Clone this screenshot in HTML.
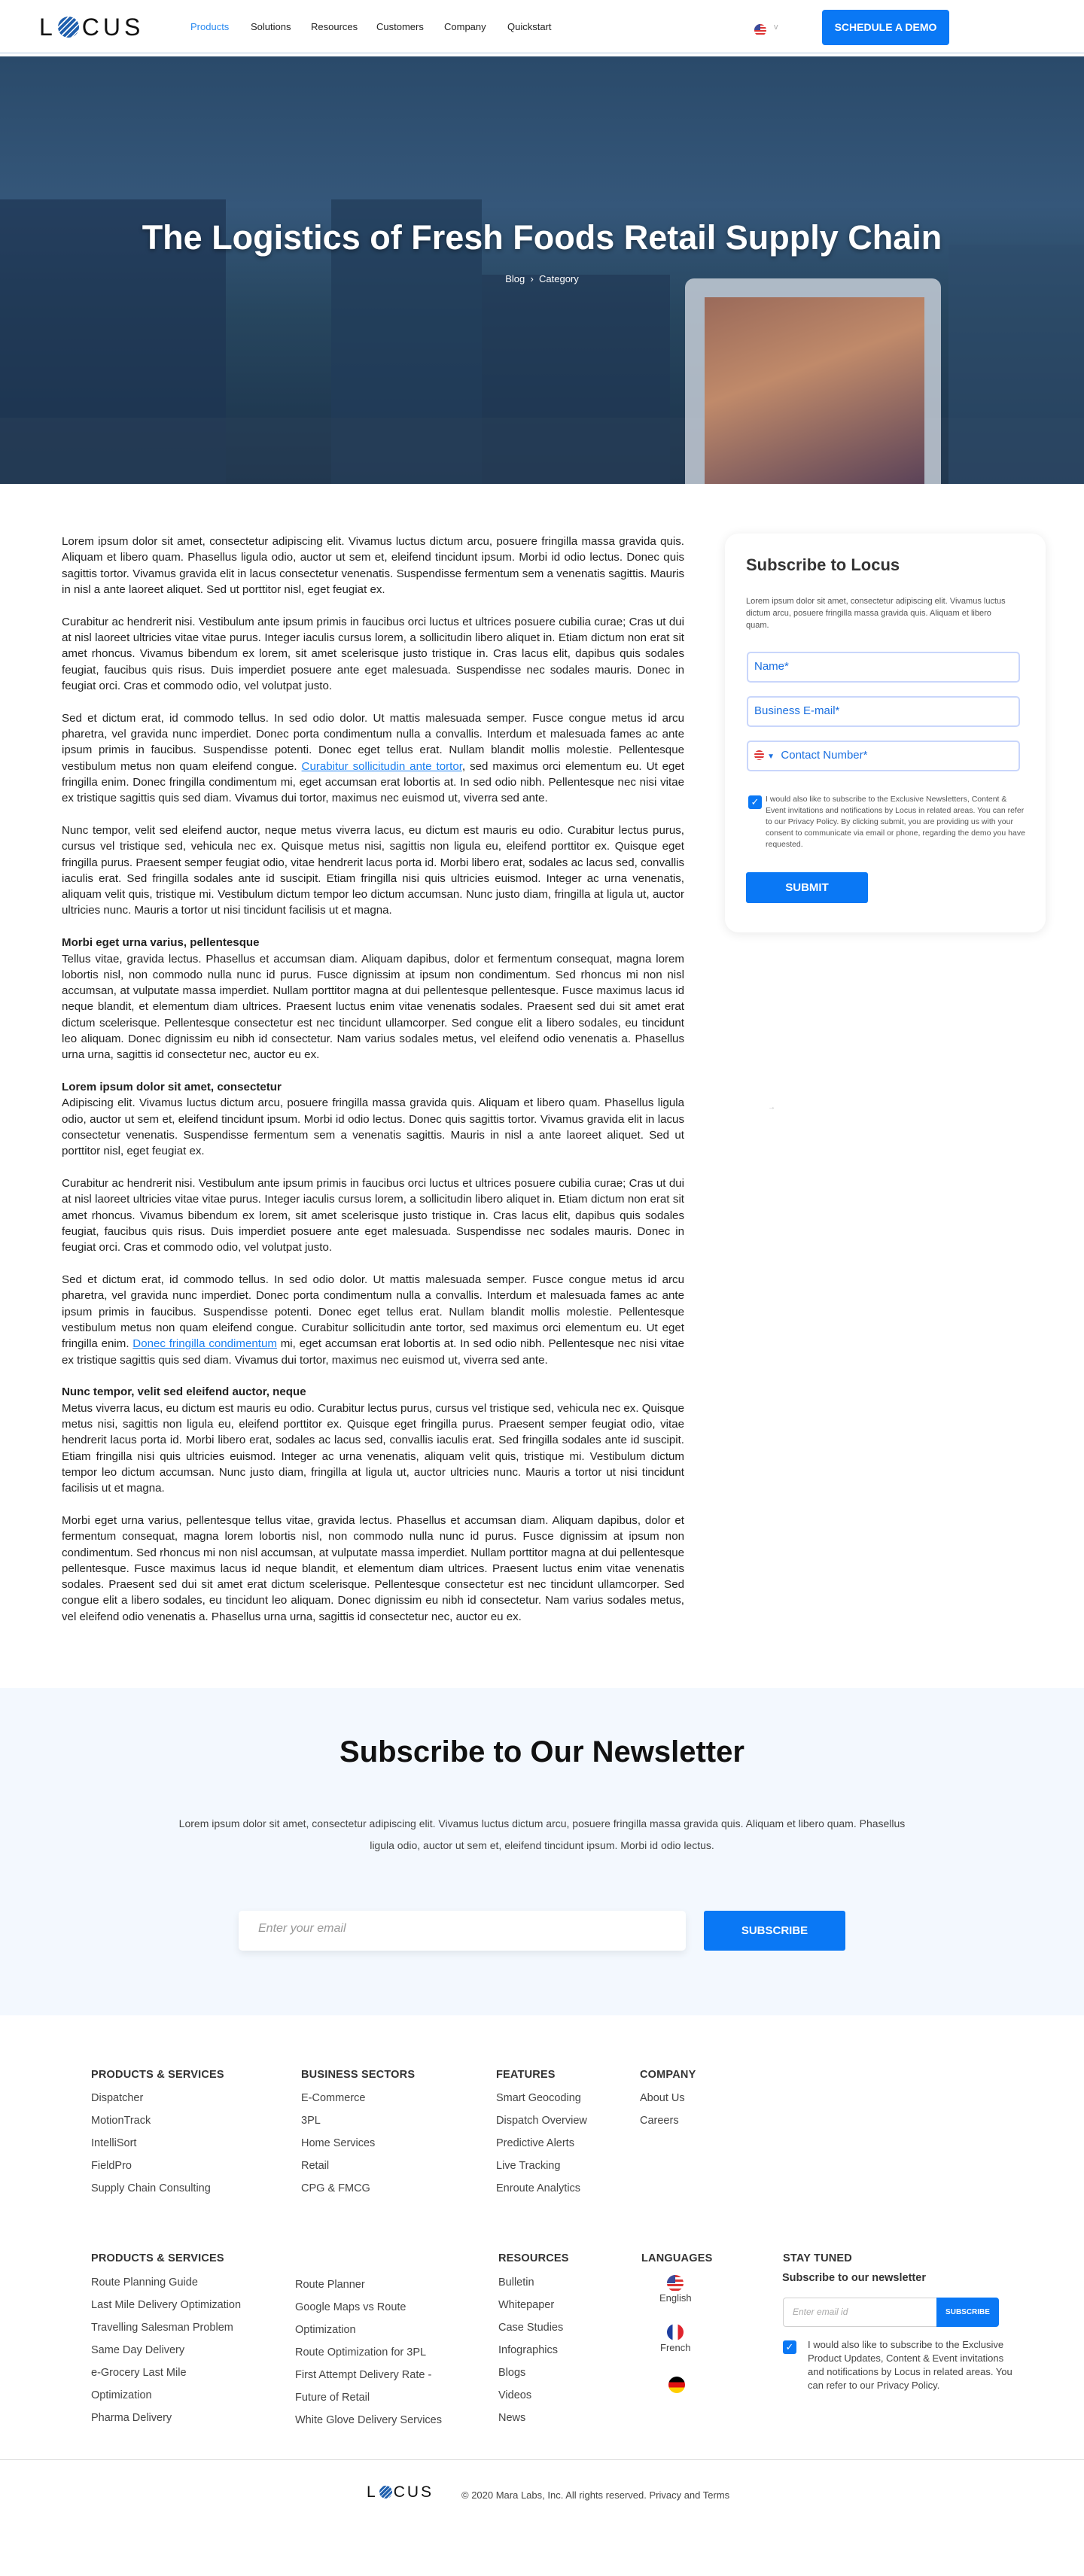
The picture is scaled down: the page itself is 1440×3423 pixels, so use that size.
<!DOCTYPE html>
<html><head><meta charset="utf-8">
<style>
*{margin:0;padding:0;box-sizing:border-box}
body{width:1440px;height:3423px;position:relative;background:#fff;font-family:"Liberation Sans",sans-serif;color:#222;overflow:hidden}
.a{position:absolute}
.nav span{position:absolute;top:28px;font-size:13px;color:#222}
.art{position:absolute;left:82px;top:709px;width:827px;font-size:15.1px;line-height:21.3px;text-align:justify;color:#222}
.art p{margin-bottom:21.5px}
.art b{display:block}
.art a{color:#1a7ff0;text-decoration:underline}
.card{left:963px;top:709px;width:426px;height:530px;border-radius:18px;box-shadow:0 2px 14px rgba(0,0,0,.09);background:#fff}
.inp{position:absolute;left:29px;width:363px;height:41px;border:2px solid #c9d6fb;border-radius:5px;color:#1a6fe0;font-size:15px;padding:9px 8px}
.fh{position:absolute;font-size:14.5px;color:#333;font-weight:bold;letter-spacing:.2px}
.fl{position:absolute;font-size:14.5px;color:#444;line-height:30px}
.blue{background:#0a78f5}
</style></head><body>
<!-- header -->
<div class="a" style="left:0;top:0;width:1440px;height:72px;background:#fff;border-bottom:3px solid #e7eef6"></div>
<div class="a" style="left:52px;top:17px;font-size:32px;letter-spacing:5px;font-weight:300;color:#111;line-height:38px">L<span style="display:inline-block;width:28px;height:28px;border-radius:50%;background:repeating-linear-gradient(135deg,#1f5fae 0 4px,#fff 4px 5.5px);vertical-align:-3px;margin:0 4px 0 2px"></span>CUS</div>
<div class="nav">
<span style="left:253px;color:#2a8af0">Products</span>
<span style="left:333px">Solutions</span>
<span style="left:413px">Resources</span>
<span style="left:500px">Customers</span>
<span style="left:590px">Company</span>
<span style="left:674px">Quickstart</span>
</div>
<div class="a" style="left:1002px;top:32px;width:16px;height:16px;border-radius:50%;background:repeating-linear-gradient(#d33 0 2px,#fff 2px 4px);overflow:hidden"><div style="width:8px;height:8px;background:#3b4a9a"></div></div>
<div class="a" style="left:1028px;top:30px;font-size:11px;color:#aaa">v</div>
<div class="a blue" style="left:1092px;top:13px;width:169px;height:47px;border-radius:4px;color:#fff;font-weight:bold;font-size:14px;text-align:center;line-height:47px">SCHEDULE A DEMO</div>
<!-- hero -->
<div class="a" style="left:0;top:75px;width:1440px;height:568px;background:linear-gradient(180deg,#2a4a6a 0%,#35577a 35%,#27465f 60%,#1b3149 100%);overflow:hidden">
<div class="a" style="left:0;top:190px;width:300px;height:380px;background:#1e3552;opacity:.7"></div>
<div class="a" style="left:440px;top:190px;width:200px;height:380px;background:#223c5a;opacity:.75"></div>
<div class="a" style="left:640px;top:290px;width:250px;height:280px;background:#203855;opacity:.65"></div>
<div class="a" style="left:0;top:480px;width:1440px;height:90px;background:#2a4058;opacity:.5"></div>
<div class="a" style="left:910px;top:295px;width:340px;height:300px;background:#cfd6de;border-radius:12px;opacity:.8"></div>
<div class="a" style="left:936px;top:320px;width:292px;height:250px;background:linear-gradient(160deg,#9a6a5a,#c08a6a 40%,#5a4258)"></div>
<div class="a" style="left:1260px;top:250px;width:180px;height:320px;background:#2e4c6c;opacity:.6"></div>
</div>
<div class="a" style="left:0;top:290px;width:1440px;text-align:center;color:#fff;font-size:45px;font-weight:bold;text-shadow:0 2px 6px rgba(0,0,0,.4)">The Logistics of Fresh Foods Retail Supply Chain</div>
<div class="a" style="left:0;top:363px;width:1440px;text-align:center;color:#fff;font-size:13px">Blog &nbsp;›&nbsp; Category</div>
<!-- article -->
<div class="art">
<p>Lorem ipsum dolor sit amet, consectetur adipiscing elit. Vivamus luctus dictum arcu, posuere fringilla massa gravida quis. Aliquam et libero quam. Phasellus ligula odio, auctor ut sem et, eleifend tincidunt ipsum. Morbi id odio lectus. Donec quis sagittis tortor. Vivamus gravida elit in lacus consectetur venenatis. Suspendisse fermentum sem a venenatis sagittis. Mauris in nisl a ante laoreet aliquet. Sed ut porttitor nisl, eget feugiat ex.</p>
<p>Curabitur ac hendrerit nisi. Vestibulum ante ipsum primis in faucibus orci luctus et ultrices posuere cubilia curae; Cras ut dui at nisl laoreet ultricies vitae vitae purus. Integer iaculis cursus lorem, a sollicitudin libero aliquet in. Etiam dictum non erat sit amet rhoncus. Vivamus bibendum ex lorem, sit amet scelerisque justo tristique in. Cras lacus elit, dapibus quis sodales feugiat, faucibus quis risus. Duis imperdiet posuere ante eget malesuada. Suspendisse nec sodales mauris. Donec in feugiat orci. Cras et commodo odio, vel volutpat justo.</p>
<p>Sed et dictum erat, id commodo tellus. In sed odio dolor. Ut mattis malesuada semper. Fusce congue metus id arcu pharetra, vel gravida nunc imperdiet. Donec porta condimentum nulla a convallis. Interdum et malesuada fames ac ante ipsum primis in faucibus. Suspendisse potenti. Donec eget tellus erat. Nullam blandit mollis molestie. Pellentesque vestibulum metus non quam eleifend congue. <a>Curabitur sollicitudin ante tortor</a>, sed maximus orci elementum eu. Ut eget fringilla enim. Donec fringilla condimentum mi, eget accumsan erat lobortis at. In sed odio nibh. Pellentesque nec nisi vitae ex tristique sagittis quis sed diam. Vivamus dui tortor, maximus nec euismod ut, viverra sed ante.</p>
<p>Nunc tempor, velit sed eleifend auctor, neque metus viverra lacus, eu dictum est mauris eu odio. Curabitur lectus purus, cursus vel tristique sed, vehicula nec ex. Quisque metus nisi, sagittis non ligula eu, eleifend porttitor ex. Quisque eget fringilla purus. Praesent semper feugiat odio, vitae hendrerit lacus porta id. Morbi libero erat, sodales ac lacus sed, convallis iaculis erat. Sed fringilla sodales ante id suscipit. Etiam fringilla nisi quis ultricies euismod. Integer ac urna venenatis, aliquam velit quis, tristique mi. Vestibulum dictum tempor leo dictum accumsan. Nunc justo diam, fringilla at ligula ut, auctor ultricies nunc. Mauris a tortor ut nisi tincidunt facilisis ut et magna.</p>
<p><b>Morbi eget urna varius, pellentesque</b>Tellus vitae, gravida lectus. Phasellus et accumsan diam. Aliquam dapibus, dolor et fermentum consequat, magna lorem lobortis nisl, non commodo nulla nunc id purus. Fusce dignissim at ipsum non condimentum. Sed rhoncus mi non nisl accumsan, at vulputate massa imperdiet. Nullam porttitor magna at dui pellentesque pellentesque. Fusce maximus lacus id neque blandit, et elementum diam ultrices. Praesent luctus enim vitae venenatis sodales. Praesent sed dui sit amet erat dictum scelerisque. Pellentesque consectetur est nec tincidunt ullamcorper. Sed congue elit a libero sodales, eu tincidunt leo aliquam. Donec dignissim eu nibh id consectetur. Nam varius sodales metus, vel eleifend odio venenatis a. Phasellus urna urna, sagittis id consectetur nec, auctor eu ex.</p>
<p><b>Lorem ipsum dolor sit amet, consectetur</b>Adipiscing elit. Vivamus luctus dictum arcu, posuere fringilla massa gravida quis. Aliquam et libero quam. Phasellus ligula odio, auctor ut sem et, eleifend tincidunt ipsum. Morbi id odio lectus. Donec quis sagittis tortor. Vivamus gravida elit in lacus consectetur venenatis. Suspendisse fermentum sem a venenatis sagittis. Mauris in nisl a ante laoreet aliquet. Sed ut porttitor nisl, eget feugiat ex.</p>
<p>Curabitur ac hendrerit nisi. Vestibulum ante ipsum primis in faucibus orci luctus et ultrices posuere cubilia curae; Cras ut dui at nisl laoreet ultricies vitae vitae purus. Integer iaculis cursus lorem, a sollicitudin libero aliquet in. Etiam dictum non erat sit amet rhoncus. Vivamus bibendum ex lorem, sit amet scelerisque justo tristique in. Cras lacus elit, dapibus quis sodales feugiat, faucibus quis risus. Duis imperdiet posuere ante eget malesuada. Suspendisse nec sodales mauris. Donec in feugiat orci. Cras et commodo odio, vel volutpat justo.</p>
<p>Sed et dictum erat, id commodo tellus. In sed odio dolor. Ut mattis malesuada semper. Fusce congue metus id arcu pharetra, vel gravida nunc imperdiet. Donec porta condimentum nulla a convallis. Interdum et malesuada fames ac ante ipsum primis in faucibus. Suspendisse potenti. Donec eget tellus erat. Nullam blandit mollis molestie. Pellentesque vestibulum metus non quam eleifend congue. Curabitur sollicitudin ante tortor, sed maximus orci elementum eu. Ut eget fringilla enim. <a>Donec fringilla condimentum</a> mi, eget accumsan erat lobortis at. In sed odio nibh. Pellentesque nec nisi vitae ex tristique sagittis quis sed diam. Vivamus dui tortor, maximus nec euismod ut, viverra sed ante.</p>
<p><b>Nunc tempor, velit sed eleifend auctor, neque</b>Metus viverra lacus, eu dictum est mauris eu odio. Curabitur lectus purus, cursus vel tristique sed, vehicula nec ex. Quisque metus nisi, sagittis non ligula eu, eleifend porttitor ex. Quisque eget fringilla purus. Praesent semper feugiat odio, vitae hendrerit lacus porta id. Morbi libero erat, sodales ac lacus sed, convallis iaculis erat. Sed fringilla sodales ante id suscipit. Etiam fringilla nisi quis ultricies euismod. Integer ac urna venenatis, aliquam velit quis, tristique mi. Vestibulum dictum tempor leo dictum accumsan. Nunc justo diam, fringilla at ligula ut, auctor ultricies nunc. Mauris a tortor ut nisi tincidunt facilisis ut et magna.</p>
<p>Morbi eget urna varius, pellentesque tellus vitae, gravida lectus. Phasellus et accumsan diam. Aliquam dapibus, dolor et fermentum consequat, magna lorem lobortis nisl, non commodo nulla nunc id purus. Fusce dignissim at ipsum non condimentum. Sed rhoncus mi non nisl accumsan, at vulputate massa imperdiet. Nullam porttitor magna at dui pellentesque pellentesque. Fusce maximus lacus id neque blandit, et elementum diam ultrices. Praesent luctus enim vitae venenatis sodales. Praesent sed dui sit amet erat dictum scelerisque. Pellentesque consectetur est nec tincidunt ullamcorper. Sed congue elit a libero sodales, eu tincidunt leo aliquam. Donec dignissim eu nibh id consectetur. Nam varius sodales metus, vel eleifend odio venenatis a. Phasellus urna urna, sagittis id consectetur nec, auctor eu ex.</p>
</div>
<!-- card -->
<div class="a card">
<div class="a" style="left:28px;top:29px;font-size:22px;font-weight:bold;color:#333">Subscribe to Locus</div>
<div class="a" style="left:28px;top:82px;width:350px;font-size:11px;line-height:16px;color:#555">Lorem ipsum dolor sit amet, consectetur adipiscing elit. Vivamus luctus dictum arcu, posuere fringilla massa gravida quis. Aliquam et libero quam.</div>
<div class="inp" style="top:157px">Name*</div>
<div class="inp" style="top:216px">Business E-mail*</div>
<div class="inp" style="top:275px"><span style="display:inline-block;width:13px;height:13px;border-radius:50%;background:repeating-linear-gradient(#d33 0 2px,#fff 2px 4px);vertical-align:-2px"></span> <span style="font-size:10px">▼</span>&nbsp; Contact Number*</div>
<div class="a blue" style="left:31px;top:348px;width:18px;height:18px;border-radius:3px;color:#fff;font-size:13px;text-align:center;line-height:18px">✓</div>
<div class="a" style="left:54px;top:346px;width:345px;font-size:10.5px;line-height:15px;color:#555">I would also like to subscribe to the Exclusive Newsletters, Content &amp; Event invitations and notifications by Locus in related areas. You can refer to our Privacy Policy. By clicking submit, you are providing us with your consent to communicate via email or phone, regarding the demo you have requested.</div>
<div class="a blue" style="left:28px;top:450px;width:162px;height:41px;border-radius:3px;color:#fff;font-weight:bold;font-size:15px;text-align:center;line-height:41px">SUBMIT</div>
</div>
<div class="a" style="left:1020px;top:1466px;font-size:10px;color:#bbb">→</div>
<!-- newsletter -->
<div class="a" style="left:0;top:2243px;width:1440px;height:435px;background:#f3f8fe"></div>
<div class="a" style="left:0;top:2306px;width:1440px;text-align:center;font-size:40px;font-weight:bold;color:#111">Subscribe to Our Newsletter</div>
<div class="a" style="left:220px;top:2409px;width:1000px;text-align:center;font-size:14px;line-height:29px;color:#444">Lorem ipsum dolor sit amet, consectetur adipiscing elit. Vivamus luctus dictum arcu, posuere fringilla massa gravida quis. Aliquam et libero quam. Phasellus ligula odio, auctor ut sem et, eleifend tincidunt ipsum. Morbi id odio lectus.</div>
<div class="a" style="left:317px;top:2539px;width:594px;height:53px;background:#fff;border-radius:5px;box-shadow:0 4px 10px rgba(0,0,0,.08);font-style:italic;color:#999;font-size:16px;padding:15px 26px">Enter your email</div>
<div class="a blue" style="left:935px;top:2539px;width:188px;height:53px;border-radius:3px;color:#fff;font-weight:bold;font-size:15px;text-align:center;line-height:53px">SUBSCRIBE</div>
<!-- footer group 1 -->
<div class="fh" style="left:121px;top:2749px">PRODUCTS &amp; SERVICES</div>
<div class="fl" style="left:121px;top:2773px">Dispatcher<br>MotionTrack<br>IntelliSort<br>FieldPro<br>Supply Chain Consulting</div>
<div class="fh" style="left:400px;top:2749px">BUSINESS SECTORS</div>
<div class="fl" style="left:400px;top:2773px">E-Commerce<br>3PL<br>Home Services<br>Retail<br>CPG &amp; FMCG</div>
<div class="fh" style="left:659px;top:2749px">FEATURES</div>
<div class="fl" style="left:659px;top:2773px">Smart Geocoding<br>Dispatch Overview<br>Predictive Alerts<br>Live Tracking<br>Enroute Analytics</div>
<div class="fh" style="left:850px;top:2749px">COMPANY</div>
<div class="fl" style="left:850px;top:2773px">About Us<br>Careers</div>
<!-- group 2 -->
<div class="fh" style="left:121px;top:2993px">PRODUCTS &amp; SERVICES</div>
<div class="fl" style="left:121px;top:3018px">Route Planning Guide<br>Last Mile Delivery Optimization<br>Travelling Salesman Problem<br>Same Day Delivery<br>e-Grocery Last Mile<br>Optimization<br>Pharma Delivery</div>
<div class="fl" style="left:392px;top:3021px">Route Planner<br>Google Maps vs Route<br>Optimization<br>Route Optimization for 3PL<br>First Attempt Delivery Rate -<br>Future of Retail<br>White Glove Delivery Services</div>
<div class="fh" style="left:662px;top:2993px">RESOURCES</div>
<div class="fl" style="left:662px;top:3018px">Bulletin<br>Whitepaper<br>Case Studies<br>Infographics<br>Blogs<br>Videos<br>News</div>
<div class="fh" style="left:852px;top:2993px">LANGUAGES</div>
<div class="a" style="left:886px;top:3023px;width:22px;height:22px;border-radius:50%;background:repeating-linear-gradient(#d33 0 3px,#fff 3px 6px);overflow:hidden"><div style="width:11px;height:11px;background:#3b4a9a"></div></div>
<div class="a" style="left:876px;top:3046px;font-size:13px;color:#444">English</div>
<div class="a" style="left:886px;top:3088px;width:22px;height:22px;border-radius:50%;background:linear-gradient(90deg,#1f3fa0 33%,#fff 33% 66%,#e0242d 66%)"></div>
<div class="a" style="left:877px;top:3112px;font-size:13px;color:#444">French</div>
<div class="a" style="left:888px;top:3158px;width:22px;height:22px;border-radius:50%;background:linear-gradient(#000 33%,#dd1010 33% 66%,#ffce00 66%)"></div>
<div class="fh" style="left:1040px;top:2993px">STAY TUNED</div>
<div class="a" style="left:1039px;top:3019px;font-size:14.5px;font-weight:bold;color:#333">Subscribe to our newsletter</div>
<div class="a" style="left:1040px;top:3053px;width:287px;height:39px;border:1px solid #d0d0d0;border-radius:4px;font-style:italic;color:#aaa;font-size:12px;padding:11px 12px">Enter email id</div>
<div class="a blue" style="left:1244px;top:3053px;width:83px;height:39px;border-radius:0 4px 4px 0;color:#fff;font-weight:bold;font-size:10px;text-align:center;line-height:39px">SUBSCRIBE</div>
<div class="a blue" style="left:1040px;top:3110px;width:18px;height:18px;border-radius:3px;color:#fff;font-size:13px;text-align:center;line-height:18px">✓</div>
<div class="a" style="left:1073px;top:3107px;width:280px;font-size:13px;line-height:18px;color:#444">I would also like to subscribe to the Exclusive Product Updates, Content &amp; Event invitations and notifications by Locus in related areas. You can refer to our Privacy Policy.</div>
<div class="a" style="left:0;top:3268px;width:1440px;height:1px;background:#ddd"></div>
<div class="a" style="left:487px;top:3300px;font-size:21px;letter-spacing:3px;font-weight:300;color:#111;line-height:24px">L<span style="display:inline-block;width:17px;height:17px;border-radius:50%;background:repeating-linear-gradient(135deg,#1f5fae 0 3px,#fff 3px 4px);vertical-align:-2px;margin:0 2px"></span>CUS</div>
<div class="a" style="left:613px;top:3308px;font-size:13px;color:#444">© 2020 Mara Labs, Inc. All rights reserved. Privacy and Terms</div>
</body></html>
